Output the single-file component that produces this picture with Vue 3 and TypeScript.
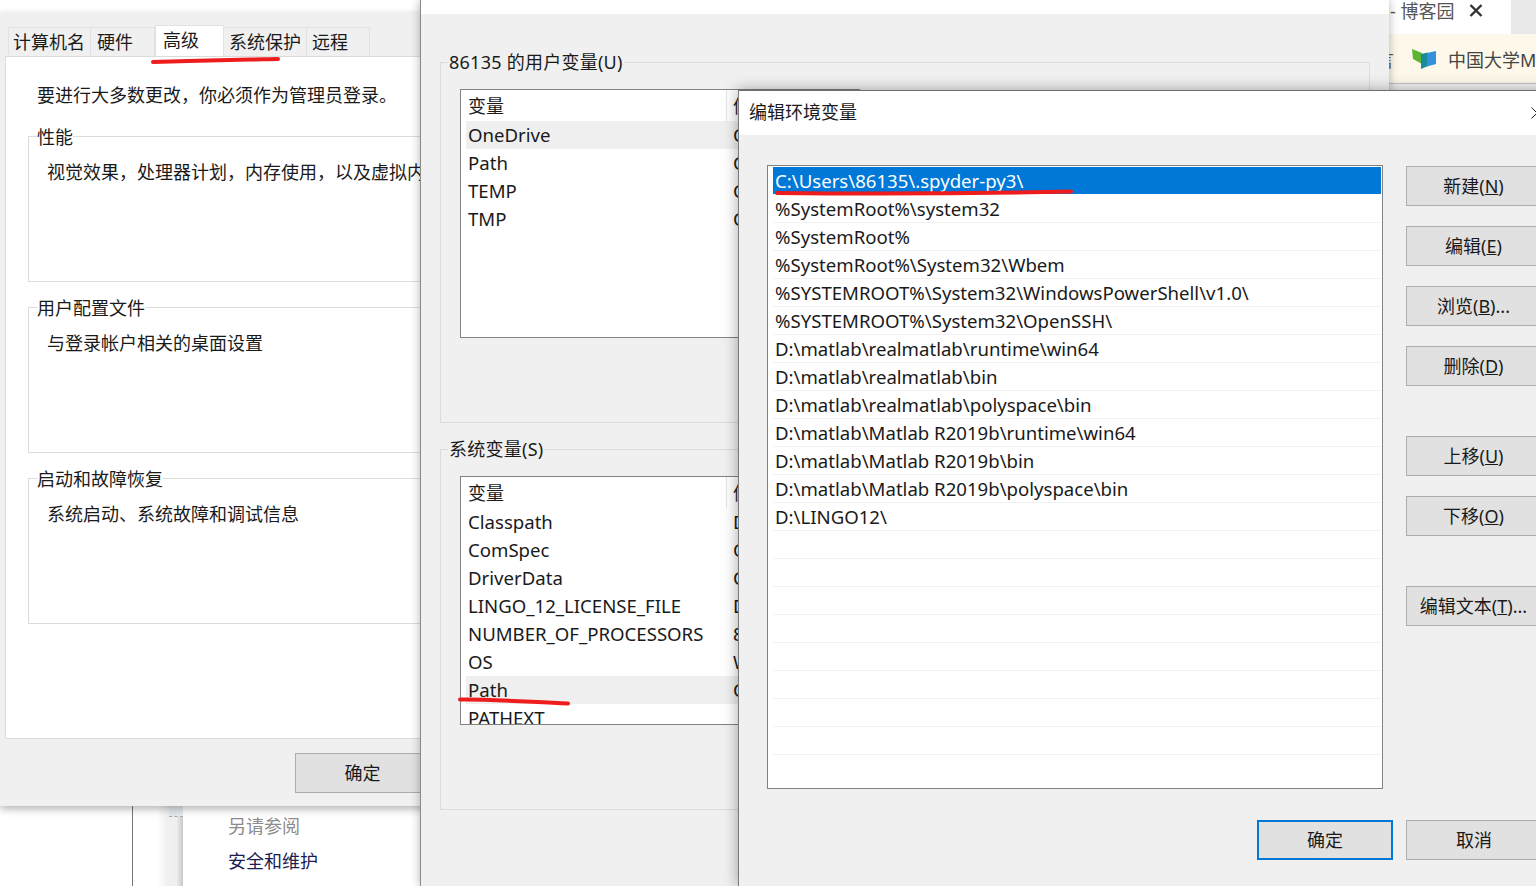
<script setup lang="ts">
const tabs = [
  { label: '计算机名', width: 83, pad: 4, active: false },
  { label: '硬件', width: 64, pad: 6, active: false },
  { label: '高级', width: 69, pad: 7, active: true },
  { label: '系统保护', width: 83, pad: 5, active: false },
  { label: '远程', width: 63, pad: 5, active: false },
];

const sysGroups = [
  { title: '性能', text: '视觉效果，处理器计划，内存使用，以及虚拟内存' },
  { title: '用户配置文件', text: '与登录帐户相关的桌面设置' },
  { title: '启动和故障恢复', text: '系统启动、系统故障和调试信息' },
];

const userVars = [
  { name: 'OneDrive', value: 'C', hot: true },
  { name: 'Path', value: 'C', hot: false },
  { name: 'TEMP', value: 'C', hot: false },
  { name: 'TMP', value: 'C', hot: false },
];

const systemVars = [
  { name: 'Classpath', value: 'D', hot: false },
  { name: 'ComSpec', value: 'C', hot: false },
  { name: 'DriverData', value: 'C', hot: false },
  { name: 'LINGO_12_LICENSE_FILE', value: 'D', hot: false },
  { name: 'NUMBER_OF_PROCESSORS', value: '8', hot: false },
  { name: 'OS', value: 'W', hot: false },
  { name: 'Path', value: 'C', hot: true },
  { name: 'PATHEXT', value: '', hot: false },
];

const pathRows = [
  'C:\\Users\\86135\\.spyder-py3\\',
  '%SystemRoot%\\system32',
  '%SystemRoot%',
  '%SystemRoot%\\System32\\Wbem',
  '%SYSTEMROOT%\\System32\\WindowsPowerShell\\v1.0\\',
  '%SYSTEMROOT%\\System32\\OpenSSH\\',
  'D:\\matlab\\realmatlab\\runtime\\win64',
  'D:\\matlab\\realmatlab\\bin',
  'D:\\matlab\\realmatlab\\polyspace\\bin',
  'D:\\matlab\\Matlab R2019b\\runtime\\win64',
  'D:\\matlab\\Matlab R2019b\\bin',
  'D:\\matlab\\Matlab R2019b\\polyspace\\bin',
  'D:\\LINGO12\\',
  '', '', '', '', '', '', '', '',
];

const sideButtons = [
  { label: '新建', key: 'N', tail: ')', gap: false },
  { label: '编辑', key: 'E', tail: ')', gap: false },
  { label: '浏览', key: 'B', tail: ')...', gap: false },
  { label: '删除', key: 'D', tail: ')', gap: false },
  { label: '上移', key: 'U', tail: ')', gap: true },
  { label: '下移', key: 'O', tail: ')', gap: false },
  { label: '编辑文本', key: 'T', tail: ')...', gap: true },
];
</script>

<template>
  <div class="desktop">
    <!-- control panel behind everything -->
    <div class="back-line"></div>
    <div class="back-band"><span class="band-patch"></span></div>
    <div class="back-panel">
      <div class="see-also">另请参阅</div>
      <div class="back-link">安全和维护</div>
    </div>

    <!-- browser corner -->
    <div class="browser">
      <div class="tabstrip">
        <div class="browser-tab">
          <span class="tab-title">- 博客园</span>
          <svg class="tab-close" width="14" height="13" viewBox="0 0 14 13">
            <path d="M1.500 1 L12.500 12 M12.500 1 L1.500 12" stroke="#333" stroke-width="2.400" fill="none" />
          </svg>
        </div>
      </div>
      <div class="bookmarks">
        <span class="cut-char">言</span>
        <svg class="mooc" width="25" height="22" viewBox="0 0 25 22">
          <path d="M0 1 L10 5 V16 L1 11 Z" fill="#5cb531" />
          <path d="M9 6 L16 4.500 V18 L9 21 Z" fill="#1b8b9b" />
          <path d="M15 5 L24 3 V16 L15 18.500 Z" fill="#3391dc" />
        </svg>
        <span class="bookmark-text">中国大学MOOC</span>
      </div>
      <div class="browser-rest"></div>
    </div>

    <!-- system properties window -->
    <section class="win win-sys">
      <div class="sys-body">
        <div class="tabs">
          <div
            v-for="tab in tabs"
            :key="tab.label"
            class="tab"
            :class="{ active: tab.active }"
            :style="{ width: tab.width + 'px', paddingLeft: tab.pad + 'px' }"
          >{{ tab.label }}</div>
        </div>
        <div class="sys-panel">
          <p class="admin-note">要进行大多数更改，你必须作为管理员登录。</p>
          <div v-for="group in sysGroups" :key="group.title" class="group sys-group">
            <span class="legend sys-legend">{{ group.title }}</span>
            <p class="sys-text">{{ group.text }}</p>
          </div>
        </div>
        <div class="sys-actions">
          <button class="btn sys-ok">确定</button>
        </div>
      </div>
    </section>

    <!-- environment variables window -->
    <section class="win win-env">
      <div class="env-title"></div>
      <div class="env-body">
        <div class="group env-group">
          <span class="legend env-legend">86135 的用户变量(U)</span>
          <div class="list var-list">
            <div class="var-head"><span class="var-name">变量</span><span class="var-sep"></span><span>值</span></div>
            <div v-for="row in userVars" :key="row.name" class="var-row" :class="{ hot: row.hot }">
              <span class="var-name">{{ row.name }}</span><span class="var-value">{{ row.value }}</span>
            </div>
          </div>
        </div>
        <div class="group env-group second">
          <span class="legend env-legend">系统变量(S)</span>
          <div class="list var-list">
            <div class="var-head"><span class="var-name">变量</span><span class="var-sep"></span><span>值</span></div>
            <div v-for="row in systemVars" :key="row.name" class="var-row" :class="{ hot: row.hot }">
              <span class="var-name">{{ row.name }}</span><span class="var-value">{{ row.value }}</span>
            </div>
          </div>
        </div>
      </div>
    </section>

    <!-- edit dialog -->
    <section class="win win-edit">
      <header class="edit-title">
        <span>编辑环境变量</span>
        <svg class="edit-close" width="12" height="12" viewBox="0 0 12 12">
          <path d="M0.500 0.500 L11.500 11.500 M11.500 0.500 L0.500 11.500" stroke="#222" stroke-width="1" fill="none" />
        </svg>
      </header>
      <div class="edit-body">
        <div class="list path-list">
          <div v-for="(row, i) in pathRows" :key="i" class="path-row" :class="{ selected: i === 0 }">{{ row }}</div>
        </div>
        <div class="side-buttons">
          <button v-for="b in sideButtons" :key="b.key" class="btn side-btn" :class="{ 'gap-before': b.gap }">
            {{ b.label }}(<u>{{ b.key }}</u>{{ b.tail }}
          </button>
        </div>
      </div>
      <footer class="edit-actions">
        <button class="btn primary">确定</button>
        <button class="btn cancel">取消</button>
      </footer>
    </section>

    <!-- hand drawn red marks -->
    <svg class="marks" width="1536" height="886" viewBox="0 0 1536 886">
      <path d="M153 62 C185 61 225 60 250 59.500 C262 59.300 272 59 278 59" />
      <path d="M460 699.500 C490 699 530 702 568 703.500" />
      <path d="M777 193 C860 194 980 193.500 1071 191.500" />
    </svg>
  </div>
</template>

<style>
html, body {
  margin: 0;
  background: #fff;
  overflow: hidden;
}
</style>

<style scoped>
.desktop {
  position: relative;
  width: 1536px;
  height: 886px;
  overflow: hidden;
  background: #fff;
  color: #1a1a1a;
  font-family: "Noto Sans", "Noto Sans CJK SC", sans-serif;
  font-size: 18px;
  line-height: 28px;
}
.back-line {
  position: absolute;
  left: 132px;
  top: 800px;
  width: 1px;
  height: 86px;
  background: #777;
}
.back-band {
  position: absolute;
  left: 157px;
  top: 800px;
  width: 26px;
  height: 86px;
  background: linear-gradient(90deg, #fff 0%, #f1f1f1 35%, #eeeeee 75%, #c9c9c9 100%);
}
.band-patch {
  display: block;
  margin: 6px 0 0 12px;
  width: 14px;
  height: 10px;
  background: #e2e9ef;
  border-bottom: 1px dashed #aaa;
}
.back-panel {
  position: absolute;
  left: 183px;
  top: 800px;
  width: 240px;
  height: 86px;
  box-sizing: border-box;
  padding: 12px 0 0 45px;
}
.see-also {
  color: #8c8c8c;
  margin-bottom: 7px;
}
.back-link {
  color: #1c1c50;
}
.browser {
  position: absolute;
  left: 1389px;
  top: 0;
  width: 147px;
  height: 90px;
  overflow: hidden;
  background: #fff;
}
.tabstrip {
  height: 34px;
  background: #e8e8e8;
}
.browser-tab {
  width: 122px;
  height: 34px;
  background: #fff;
  display: flex;
  align-items: flex-start;
  padding-left: 1px;
  box-sizing: border-box;
  color: #555;
}
.tab-title {
  line-height: 22px;
  white-space: nowrap;
}
.tab-close {
  margin-left: 15px;
  margin-top: 4px;
}
.bookmarks {
  position: relative;
  height: 50px;
  background: #fdf8e9;
  border-bottom: 1px solid #c4c4c4;
  box-sizing: border-box;
  display: flex;
  align-items: center;
  white-space: nowrap;
  padding: 2px 0 0 23px;
}
.browser-rest {
  height: 6px;
  background: #f4f4f4;
}
.cut-char {
  position: absolute;
  left: -13px;
  top: 12px;
  color: #666;
}
.mooc {
  flex: none;
  margin-top: -2px;
}
.bookmark-text {
  margin-left: 11px;
  color: #444;
}
.win {
  position: absolute;
  overflow: hidden;
  background: #f0f0f0;
  box-sizing: border-box;
}
.win-env {
  left: 420px;
  top: 0;
  width: 969px;
  height: 886px;
  border-left: 1px solid #8a8a8a;
  box-shadow: 0 0 9px rgba(0, 0, 0, 0.3);
}
.env-title {
  height: 14px;
  background: #fff;
}
.env-body {
  padding: 48px 19px 0 19px;
}
.group {
  position: relative;
  border: 1px solid #dcdcdc;
  box-sizing: border-box;
}
.legend {
  position: absolute;
  background: #f0f0f0;
  line-height: 24px;
  white-space: nowrap;
}
.env-group {
  height: 361px;
  padding: 26px 0 0 19px;
}
.env-group.second {
  margin-top: 26px;
}
.env-legend {
  left: 7px;
  top: -13px;
  padding: 0 1px;
  letter-spacing: 0.25px;
}
.list {
  background: #fff;
  border: 1px solid #828282;
  box-sizing: border-box;
  overflow: hidden;
}
.var-list {
  width: 400px;
  height: 249px;
  padding-left: 5px;
}
.var-head {
  display: flex;
  height: 31px;
  line-height: 33px;
}
.var-head .var-name {
  width: 260px;
}
.var-sep {
  width: 1px;
  height: 31px;
  background: #e5e5e5;
  margin-right: 6px;
}
.var-row {
  display: flex;
  height: 28px;
  font-size: 18.6px;
}
.var-row.hot {
  background: #efefef;
}
.var-name {
  flex: none;
  width: 267px;
  padding-left: 2px;
  box-sizing: border-box;
}
.var-value {
  flex: none;
}
.win-sys {
  left: 0;
  top: 13px;
  width: 470px;
  height: 793px;
  box-shadow: 0 3px 8px rgba(0, 0, 0, 0.3);
}
.sys-body {
  padding-top: 12px;
  height: 100%;
  box-sizing: border-box;
  display: flex;
  flex-direction: column;
}
.tabs {
  display: flex;
  align-items: flex-end;
  height: 31px;
  padding-left: 8px;
  white-space: nowrap;
}
.tab {
  height: 29px;
  box-sizing: border-box;
  border: 1px solid #e2e2e2;
  border-bottom: 0;
  border-left-width: 0;
  line-height: 28px;
}
.tab:first-child {
  border-left-width: 1px;
}
.tab.active {
  height: 31px;
  background: #fff;
  border-left-width: 1px;
}
.sys-panel {
  width: 460px;
  height: 683px;
  margin-left: 5px;
  box-sizing: border-box;
  background: #fff;
  border: 1px solid #dcdcdc;
  padding: 24px 0 0 22px;
}
.admin-note {
  margin: 0 0 27px 9px;
  line-height: 28px;
}
.sys-group {
  height: 146px;
  margin-bottom: 25px;
}
.sys-legend {
  left: 8px;
  top: -12px;
  background: #fff;
}
.sys-text {
  margin: 21px 0 0 18px;
  white-space: nowrap;
}
.sys-actions {
  padding: 14px 0 0 295px;
}
.btn {
  font: inherit;
  color: #1a1a1a;
  background: #e1e1e1;
  border: 1px solid #adadad;
  box-sizing: border-box;
  height: 40px;
  padding: 0;
  white-space: nowrap;
}
.sys-ok {
  width: 135px;
}
.win-edit {
  left: 738px;
  top: 90px;
  width: 810px;
  height: 796px;
  border-left: 1px solid #7a7a7a;
  border-top: 1px solid #6e6e6e;
  box-shadow: 0 0 14px rgba(0, 0, 0, 0.35);
}
.edit-title {
  height: 44px;
  box-sizing: border-box;
  background: #fff;
  display: flex;
  align-items: center;
  padding: 0 0 2px 10px;
  position: relative;
}
.edit-close {
  position: absolute;
  left: 792px;
  top: 16px;
}
.edit-body {
  display: flex;
  padding: 30px 0 0 28px;
}
.path-list {
  flex: none;
  width: 616px;
  height: 624px;
  padding: 1px 1px 0 5px;
  font-size: 18.6px;
}
.path-row {
  height: 28px;
  padding-left: 2px;
  border-bottom: 1px solid #f1f1f1;
  box-sizing: border-box;
  white-space: nowrap;
}
.path-row.selected {
  background: #0078d7;
  color: #fff;
  border-bottom-color: #fff;
}
.side-buttons {
  display: flex;
  flex-direction: column;
  gap: 20px;
  margin-left: 23px;
  padding-top: 1px;
}
.side-btn {
  width: 135px;
}
.side-btn.gap-before {
  margin-top: 30px;
}
.edit-actions {
  display: flex;
  padding: 31px 0 0 518px;
  gap: 13px;
}
.edit-actions .btn {
  width: 136px;
}
.primary {
  border: 2px solid #0078d7;
}
.marks {
  position: absolute;
  left: 0;
  top: 0;
  pointer-events: none;
}
.marks path {
  fill: none;
  stroke: #ee1c1c;
  stroke-width: 4;
  stroke-linecap: round;
}
</style>
